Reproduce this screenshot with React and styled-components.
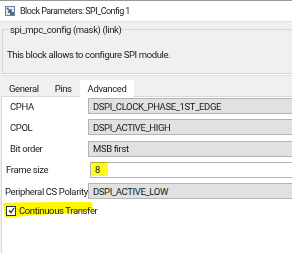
import React from "react";
import styled, { createGlobalStyle } from "styled-components";

const Global = createGlobalStyle`
  html, body { margin: 0; padding: 0; background: #fff; }
  body { font-family: Roboto, "Liberation Sans", sans-serif; }
`;

const Window = styled.div`
  width: 292px;
  height: 253px;
  overflow: hidden;
  display: flex;
  flex-direction: column;
  background: #f0f0f0;
  font-size: 9.5px;
  letter-spacing: -0.38px;
  color: #1a1a1a;
`;

const TitleBar = styled.div`
  height: 20px;
  border-top: 1px solid #9a9a9a;
  border-bottom: 1px solid #e4e4e4;
  background: #fff;
  display: flex;
  align-items: center;
  padding-left: 5px;
  gap: 5px;
  font-size: 9px;
  letter-spacing: -0.55px;
  color: #222;
  flex-shrink: 0;
`;

const Group = styled.fieldset`
  margin: 2px 0 0 2px;
  padding: 14px 5px 0 4px;
  border: 1px solid #d6d6d6;
  border-right: none;
  height: 50px;
  box-sizing: border-box;
  box-shadow: 0 1px 0 #fbfbfb, 0 2px 0 #e2e2e2;
  flex-shrink: 0;
`;

const Legend = styled.legend`
  padding: 0 1px;
  margin-left: 2px;
`;

const Description = styled.div``;

const TabStrip = styled.div`
  display: flex;
  align-items: flex-end;
  margin-top: 5px;
  height: 17px;
  padding-left: 1px;
  flex-shrink: 0;
`;

const Tab = styled.div`
  height: ${(p) => (p.$active ? "17px" : "15px")};
  padding: 0 ${(p) => p.$pad}px;
  display: flex;
  align-items: center;
  background: ${(p) => (p.$active ? "#fff" : "transparent")};
  margin-bottom: ${(p) => (p.$active ? "-1px" : "0")};
  position: relative;
  z-index: 1;
`;

const Panel = styled.div`
  flex: 1;
  background: #fff;
  border-top: 1px solid #d9d9d9;
  border-left: 1px solid #d9d9d9;
  margin-left: 1px;
  padding-top: 1px;
  display: flex;
  flex-direction: column;
  gap: 5.25px;
  position: relative;
`;

const Row = styled.div`
  display: grid;
  grid-template-columns: 86px 1fr;
  align-items: center;
  height: 16px;
`;

const Label = styled.div`
  padding-left: ${(p) => p.$indent}px;
  white-space: nowrap;
`;

const Field = styled.div`
  height: 16px;
  box-sizing: border-box;
  border: 1px solid #b4b4b4;
  border-right: none;
  background: ${(p) => (p.$edit ? "#fff" : "#e1e1e1")};
  display: flex;
  align-items: center;
  padding-left: 4px;
  margin-left: ${(p) => (p.$edit ? 2 : 0)}px;
  position: relative;
`;

const Mark = styled.span`
  position: absolute;
  left: 0px;
  top: -1px;
  width: 17px;
  height: 14px;
  background: rgba(255, 250, 0, 0.85);
  mix-blend-mode: multiply;
`;

const CheckRow = styled.label`
  display: flex;
  align-items: center;
  gap: 3px;
  padding-left: 4px;
  margin-top: 1px;
  position: relative;
`;

const Box = styled.span`
  width: 8px;
  height: 8px;
  border: 1px solid #333;
  background: #fff;
  display: inline-flex;
  align-items: center;
  justify-content: center;
  position: relative;
`;

const Highlight = styled.svg`
  position: absolute;
  left: 0px;
  top: -5px;
  mix-blend-mode: multiply;
  pointer-events: none;
`;

const Text = styled.span`
  position: relative;
`;

function BlockIcon() {
  return (
    <svg width="10" height="10" viewBox="0 0 10 10">
      <rect x="0.5" y="0.5" width="9" height="9" fill="#dfe6ee" stroke="#6f8297" />
      <path d="M2 2 L6 6 M6 3 V6 H3" stroke="#2d5d9a" strokeWidth="1.3" fill="none" />
      <rect x="5" y="6" width="4" height="3" fill="#5a6b7d" />
    </svg>
  );
}

const rows = [
  { label: "CPHA", value: "DSPI_CLOCK_PHASE_1ST_EDGE", indent: 8 },
  { label: "CPOL", value: "DSPI_ACTIVE_HIGH", indent: 8 },
  { label: "Bit order", value: "MSB first", indent: 8 },
  { label: "Frame size", value: "8", edit: true, indent: 4 },
  { label: "Peripheral CS Polarity", value: "DSPI_ACTIVE_LOW", indent: 3 },
];

export default function App() {
  return (
    <Window>
      <Global />
      <TitleBar>
        <BlockIcon />
        <span>Block Parameters: SPI_Config 1</span>
      </TitleBar>
      <Group>
        <Legend>spi_mpc_config (mask) (link)</Legend>
        <Description>This block allows to configure SPI module.</Description>
      </Group>
      <TabStrip>
        <Tab $pad={8}>General</Tab>
        <Tab $pad={8}>Pins</Tab>
        <Tab $pad={8} $active>Advanced</Tab>
      </TabStrip>
      <Panel>
        {rows.map((r) => (
          <Row key={r.label}>
            <Label $indent={r.indent}>{r.label}</Label>
            <Field $edit={r.edit}>
              {r.edit && <Mark />}
              <Text>{r.value}</Text>
            </Field>
          </Row>
        ))}
        <CheckRow>
          <Highlight width="92" height="22" viewBox="0 0 92 22">
            <path
              d="M1 3 C 20 2, 60 2, 90 2 L 91 11 C 70 13, 30 15, 3 18 Z"
              fill="#fff700"
            />
          </Highlight>
          <Box>
            <svg width="7" height="7" viewBox="0 0 7 7">
              <path d="M1 3.5 L3 5.5 L6 1" stroke="#222" strokeWidth="1.2" fill="none" />
            </svg>
          </Box>
          <Text>Continuous Transfer</Text>
        </CheckRow>
      </Panel>
    </Window>
  );
}
